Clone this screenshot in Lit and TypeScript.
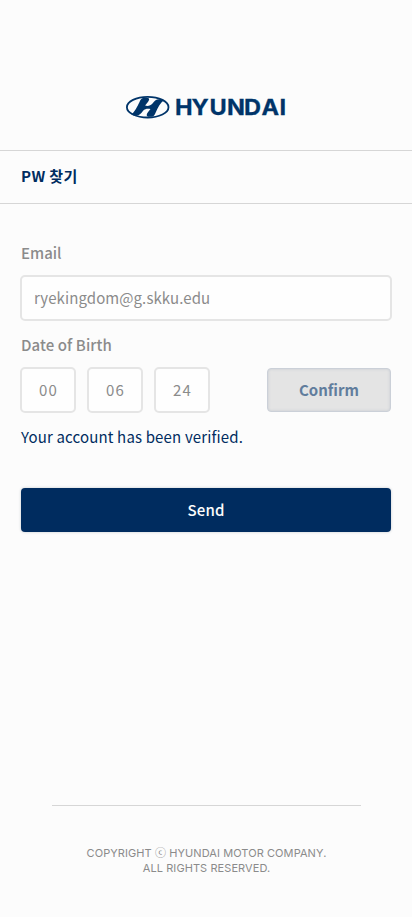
import { LitElement, html, css, svg } from "lit";
import { customElement } from "lit/decorators.js";

const emblem = svg`
  <ellipse cx="22" cy="11.2" rx="20.8" ry="10.3" fill="#fcfcfc" stroke="#003469" stroke-width="1.8"/>
  <path fill="#003469" d="M17.2 2 C26 .8 24.4 3.6 19.4 9.6 C22 10.4 25 9.8 26.8 7.6 C29 4.4 31.2 1.7 38.4 4 C34.6 6.8 32 12 30 16.4 C28.7 19.6 27.6 20.6 26.2 20.7 C18.8 21.4 20.2 18.4 24.8 13 C22 12.4 19.4 12.6 17.4 14.8 C14.6 18.6 12 21.3 5.6 18.4 C9.2 15.8 11.6 10.4 13.6 6.4 C14.9 3.5 15.8 2.3 17.2 2 Z"/>`;

@customElement("app-root")
export class AppRoot extends LitElement {
  static styles = css`
    * { box-sizing: border-box; }
    :host {
      display: flex; flex-direction: column; height: 917px; background: #fcfcfc;
      font-family: "Noto Sans CJK KR", sans-serif; font-size: 15px; color: #8b8b8b;
    }
    header { height: 150px; padding: 95px 0 0 125px; flex: none; }
    .logo { display: block; }
    .word { font: 700 22px Inter, sans-serif; fill: #003469; stroke: #003469; stroke-width: .3px; }
    h1 {
      margin: 0; height: 54px; flex: none; padding: 0 21px; line-height: 49px;
      border-top: 1px solid #d6d6d6; border-bottom: 1px solid #d6d6d6;
      font-size: 15px; font-weight: 700; letter-spacing: .4px; color: #002c5f;
    }
    main { padding: 39px 20px 0; display: flex; flex-direction: column; }
    label { height: 20px; line-height: 20px; padding-left: 1px; font-weight: 500; }
    .birth { margin-top: 14px; letter-spacing: .08px; }
    .box {
      height: 46px; border: 2px solid #e5e5e5; border-radius: 5px; background: #fefefe;
    }
    .mail { margin-top: 12px; padding-left: 12px; line-height: 41px; letter-spacing: .09px; }
    .row { display: flex; gap: 11px; margin-top: 12px; }
    .num { width: 56px; padding-left: 1px; text-align: center; letter-spacing: 1.2px; line-height: 41px; }
    .confirm {
      margin: 1px 1px 0 auto; width: 124px; height: 44px; border-radius: 4px; border: 1px solid #cbd0d8;
      background: #e4e4e4; color: #617d9d; font-weight: 700; line-height: 41px; text-align: center;
      box-shadow: inset 0 0 3px #c5cad1;
    }
    .note { height: 20px; line-height: 20px; margin: 14px 0 0 1px; color: #002c5f; letter-spacing: .16px; }
    .send {
      margin: 41px 1px 0; height: 44px; line-height: 43px; border-radius: 4px; background: #002c5f;
      color: #fcfcfc; text-align: center; font-weight: 500; letter-spacing: .2px; box-shadow: 0 0 3px #c4c8ce;
    }
    footer {
      margin: auto 51px 42px 52px; border-top: 1px solid #d6d6d6; padding-top: 40px;
      text-align: center; font-family: Inter, "Noto Sans CJK KR", sans-serif;
      font-size: 11px; letter-spacing: .08px; line-height: 15px; height: 70px; white-space: nowrap;
    }
    .line { height: 15px; }
  `;

  render() {
    return html`
      <header>
        <svg class="logo" width="162" height="25" viewBox="0 0 162 25" role="img" aria-label="HYUNDAI">
          <g transform="translate(.7 1)">${emblem}</g>
          <text class="word" transform="scale(1.07 1)" x="46.8 62.2 79 95.3 111.3 127.6 144.3" y="20">HYUNDAI</text>
        </svg>
      </header>
      <h1>PW 찾기</h1>
      <main>
        <label>Email</label>
        <div class="box mail">ryekingdom@g.skku.edu</div>
        <label class="birth">Date of Birth</label>
        <div class="row">
          ${["00", "06", "24"].map((n) => html`<div class="box num">${n}</div>`)}
          <div class="confirm">Confirm</div>
        </div>
        <div class="note">Your account has been verified.</div>
        <div class="send">Send</div>
      </main>
      <footer><div class="line">COPYRIGHT ⓒ HYUNDAI MOTOR COMPANY.</div><div class="line">ALL RIGHTS RESERVED.</div></footer>
    `;
  }
}
